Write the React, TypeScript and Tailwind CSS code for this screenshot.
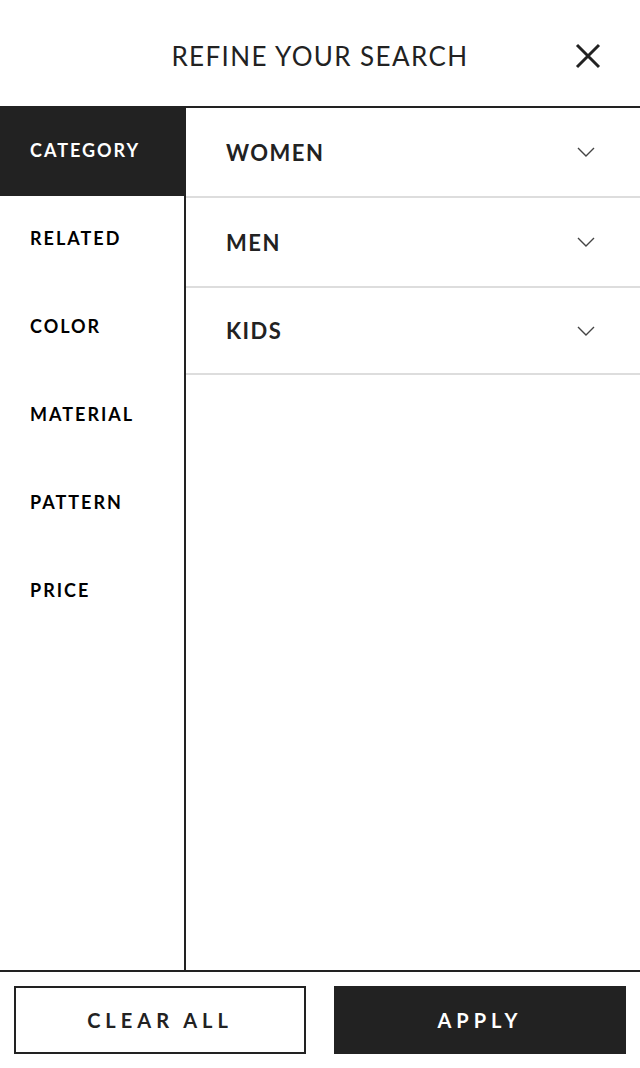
import React, { useState } from 'react';

const font = { fontFamily: 'Lato, "Open Sans", sans-serif' };

const sideItems = ['CATEGORY', 'RELATED', 'COLOR', 'MATERIAL', 'PATTERN', 'PRICE'];
const categories = ['WOMEN', 'MEN', 'KIDS'];

const Chevron = () => (
  <svg width="18" height="10" viewBox="0 0 18 10" fill="none" stroke="#444" strokeWidth="1.4">
    <path d="M1 1 L9 9 L17 1" />
  </svg>
);

const CloseIcon = () => (
  <svg width="26" height="26" viewBox="0 0 26 26" fill="none" stroke="#222" strokeWidth="3">
    <path d="M2 2 L24 24 M24 2 L2 24" />
  </svg>
);

const App = () => {
  const [active, setActive] = useState('CATEGORY');

  return (
    <div className="h-screen flex flex-col bg-white text-[#222]" style={font}>
      {/* Header */}
      <header className="h-[106px] relative flex items-center justify-center pt-[6px]">
        <h1 className="text-[26px] font-normal tracking-[1.4px]">REFINE YOUR SEARCH</h1>
        <button className="absolute right-[39px] top-[43px]">
          <CloseIcon />
        </button>
      </header>

      {/* Body */}
      <div className="flex-1 flex border-t-2 border-b-2 border-[#222]">
        <nav className="w-[186px] border-r-2 border-[#222] flex flex-col">
          {sideItems.map((item) => (
            <button
              key={item}
              onClick={() => setActive(item)}
              className={`h-[88px] pl-[30px] pb-[3px] text-left text-[18px] font-bold tracking-[2px] ${
                active === item ? 'bg-[#222] text-white pb-0' : 'bg-white text-black'
              }`}
            >
              {item}
            </button>
          ))}
        </nav>

        <div className="flex-1 flex flex-col">
          {categories.map((c, i) => (
            <div
              key={c}
              className={`${i === 2 ? 'h-[87px]' : 'h-[90px]'} flex items-center justify-between pl-[40px] pr-[45px] border-b-2 border-[#ddd]`}
            >
              <span className="text-[22px] font-bold tracking-[1.5px] text-[#222]">{c}</span>
              <Chevron />
            </div>
          ))}
        </div>
      </div>

      {/* Footer */}
      <footer className="grid grid-cols-2 gap-[28px] px-[14px] py-[14px]">
        <button className="h-[68px] border-2 border-[#222] text-[20px] font-bold tracking-[5px] text-[#222]">
          CLEAR ALL
        </button>
        <button className="h-[68px] bg-[#222] text-[20px] font-bold tracking-[5px] text-white">
          APPLY
        </button>
      </footer>
    </div>
  );
};

export default App;
